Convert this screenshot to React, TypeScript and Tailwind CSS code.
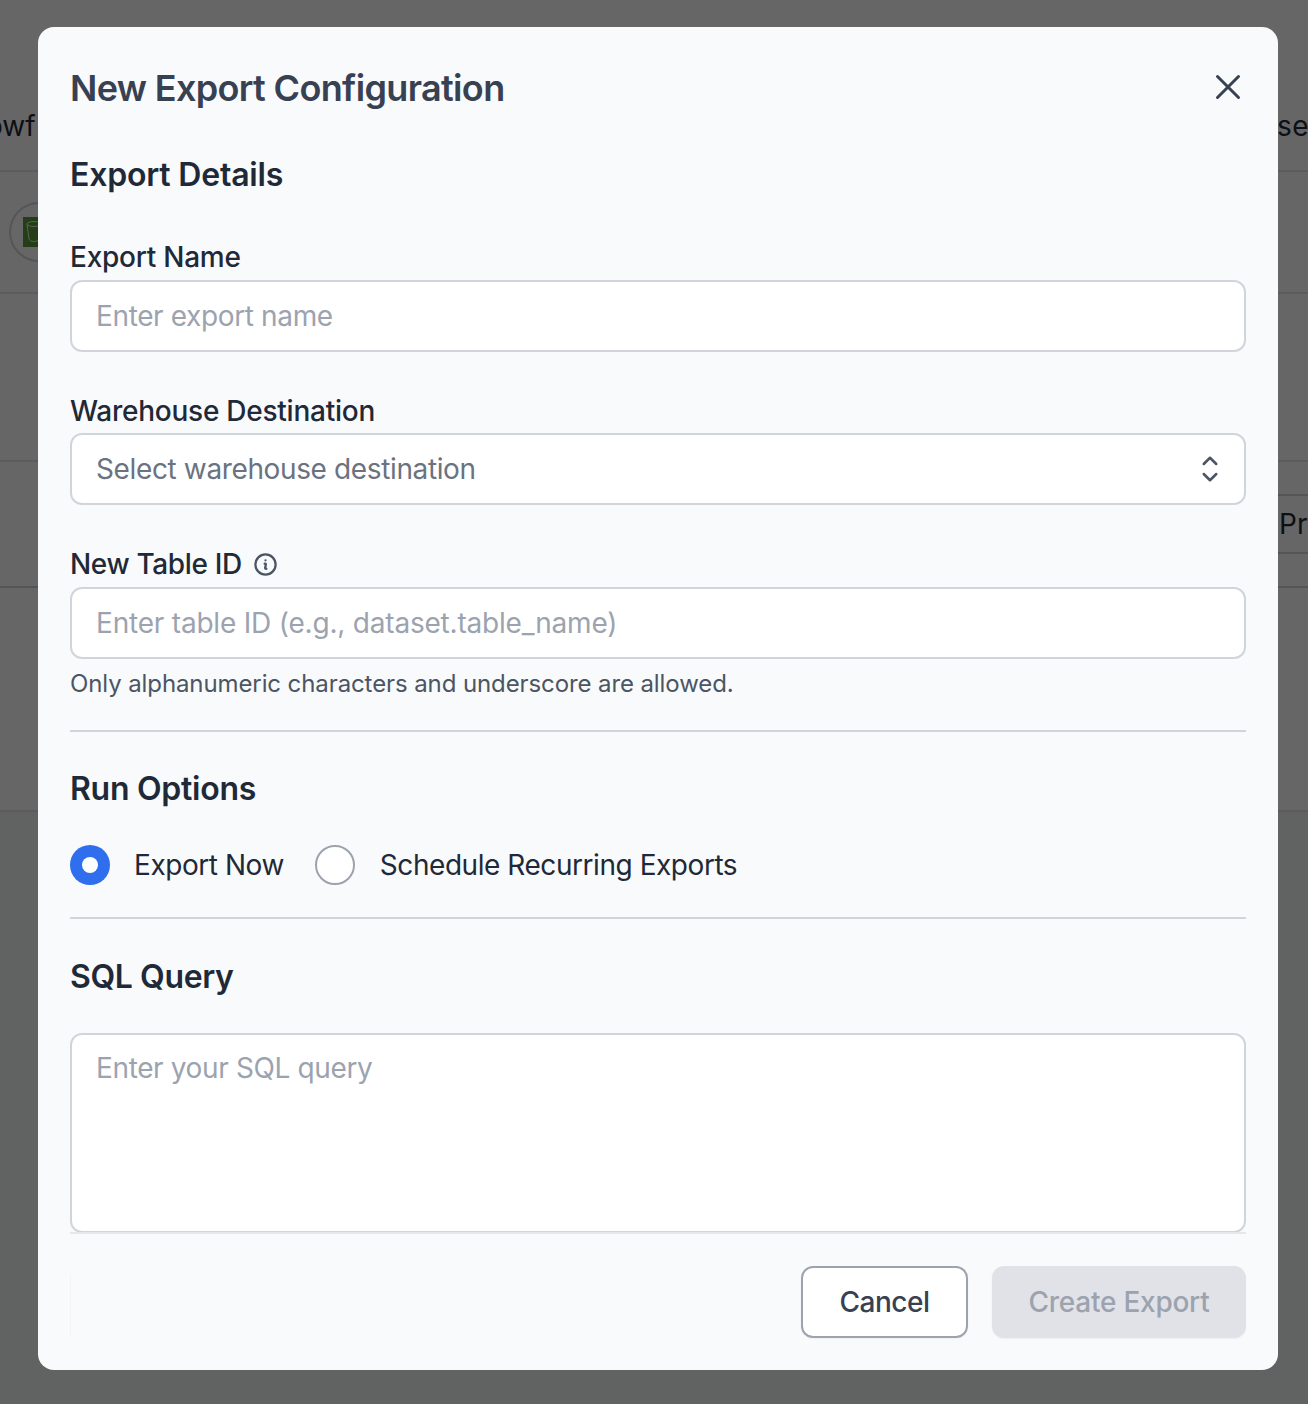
import { X } from "lucide-react";

function Field({ label, children }: { label: React.ReactNode; children: React.ReactNode }) {
  return (
    <div>
      <div className="flex items-center gap-[10px] h-[40px] text-[28px] font-medium text-[#1f2937] tracking-[-0.25px]">{label}</div>
      {children}
    </div>
  );
}

function Background() {
  return (
    <div className="h-full bg-[#f3f4f6] text-[28px] text-[#1f2937]">
      <div className="h-[172px] bg-white border-b-2 border-[#e5e7eb] pt-[105px] flex justify-between">
        <span className="-ml-[14px]">owf</span>
        <span className="-mr-[1px] tracking-[0.5px]">se</span>
      </div>
      <div className="h-[122px] bg-white border-b-2 border-[#e5e7eb] flex items-center pl-[9px]">
        <div className="w-[60px] h-[60px] rounded-full border-2 border-[#d1d5db] flex items-center justify-center">
          <div className="w-[32px] h-[30px] bg-[#5a9c3a]">
            <svg width="32" height="30" viewBox="0 0 32 30" fill="none" stroke="#e5efdd" strokeWidth="1">
              <ellipse cx="11" cy="7" rx="7" ry="2.5" />
              <path d="M4 7l2 15c.3 1.5 2.5 2.5 5 2.5s4.700-1 5-2.500l2-15" />
            </svg>
          </div>
        </div>
      </div>
      <div className="h-[168px] bg-white border-b-2 border-[#e5e7eb]" />
      <div className="h-[126px] bg-white border-b-2 border-[#d1d5db] flex justify-end items-center">
        <div className="w-[37px] h-[60px] pl-[8px] border-y-2 border-[#d1d5db] flex items-center overflow-hidden">Pro</div>
      </div>
      <div className="h-[224px] bg-white border-b-2 border-[#e5e7eb]" />
    </div>
  );
}

export default function App() {
  return (
    <div className="relative h-[1404px] w-[1308px] overflow-hidden bg-white font-['Inter',sans-serif]">
      <Background />
      <div className="absolute inset-0 bg-black/60" />
      <div className="absolute left-[38px] top-[27px] w-[1240px] h-[1343px] rounded-2xl bg-[#f9fafb] flex flex-col">
        <div className="h-[124px] shrink-0 flex items-start justify-between pl-[32px] pr-[29px] pt-[37px]">
          <h1 className="text-[36px] leading-[48px] font-semibold text-[#374151] tracking-[-0.65px]">New Export Configuration</h1>
          <X size={42} strokeWidth={1.7} className="text-[#374151] mt-[2px]" />
        </div>
        <div className="px-[32px] flex-1 overflow-hidden">
          <h2 className="text-[32px] leading-[48px] font-semibold text-[#1f2937] tracking-[-0.2px]">Export Details</h2>
          <div className="mt-[38px] flex flex-col gap-[39px]">
            <Field label="Export Name">
              <div className="mt-[3px] h-[72px] rounded-xl border-2 border-[#d1d5db] bg-white flex items-center px-[24px] text-[28px] text-[#9ca3af] tracking-[-0.37px]">Enter export name</div>
            </Field>
            <Field label="Warehouse Destination">
              <div className="mt-[2px] h-[72px] rounded-xl border-2 border-[#d1d5db] bg-white flex items-center justify-between pl-[24px] pr-[14px] text-[28px] text-[#6b7280] tracking-[-0.37px]">
                Select warehouse destination
                <svg width="40" height="40" viewBox="0 0 24 24" fill="none" stroke="#4b5563" strokeWidth="1.5" strokeLinecap="round" strokeLinejoin="round">
                  <path d="M8.250 15L12 18.750 15.750 15m-7.500-6L12 5.250 15.750 9" />
                </svg>
              </div>
            </Field>
            <Field
              label={
                <>
                  <span className="tracking-[-0.35px]">New Table ID</span>
                  <svg width="27" height="27" viewBox="0 0 24 24" fill="none" stroke="#4b5563" strokeWidth="2" strokeLinecap="round" strokeLinejoin="round">
                    <path d="M11.250 11.250l.041-.020a.750.750 0 011.063.852l-.708 2.836a.750.750 0 001.063.853l.041-.021M21 12a9 9 0 11-18 0 9 9 0 0118 0zm-9-3.750h.008v.008H12V8.250z" />
                  </svg>
                </>
              }
            >
              <div className="mt-[3px] h-[72px] rounded-xl border-2 border-[#d1d5db] bg-white flex items-center px-[24px] text-[28px] text-[#9ca3af] tracking-[-0.2px]">Enter table ID (e.g., dataset.table_name)</div>
              <p className="mt-[7px] text-[24px] leading-[36px] text-[#4b5563] tracking-[-0.1px]">Only alphanumeric characters and underscore are allowed.</p>
            </Field>
          </div>
          <div className="mt-[28px] border-t-2 border-[#d1d5db]" />
          <h2 className="mt-[33px] text-[32px] leading-[48px] font-semibold text-[#1f2937] tracking-[-0.27px]">Run Options</h2>
          <div className="mt-[31px] flex items-center gap-[31px] text-[28px] text-[#1f2937] tracking-[-0.45px]">
            <div className="flex items-center gap-[24px]">
              <span className="w-[40px] h-[40px] rounded-full bg-[#2f6fed] flex items-center justify-center">
                <span className="w-[16px] h-[16px] rounded-full bg-white" />
              </span>
              Export Now
            </div>
            <div className="flex items-center gap-[25px]">
              <span className="w-[40px] h-[40px] rounded-full border-2 border-[#9ca3af] bg-white" />
              Schedule Recurring Exports
            </div>
          </div>
          <div className="mt-[31px] border-t-2 border-[#d1d5db]" />
          <h2 className="mt-[34px] text-[32px] leading-[48px] font-semibold text-[#1f2937] tracking-[-0.4px]">SQL Query</h2>
          <div className="mt-[32px] h-[200px] rounded-xl border-2 border-[#d1d5db] bg-white px-[24px] pt-[13px] text-[28px] leading-[40px] text-[#9ca3af] tracking-[-0.37px]">Enter your SQL query</div>
        </div>
        <div className="mx-[32px] h-[138px] shrink-0 border-t-2 border-[#e5e7eb] flex items-start gap-[24px] pt-[32px]">
          <div className="mr-auto mt-[8px] w-[1px] h-[62px] bg-[#f3f4f6]" />
          <button className="w-[167px] h-[72px] rounded-xl border-2 border-[#9ca3af] bg-white text-[28px] font-medium text-[#374151] tracking-[-0.5px] shadow-xs">Cancel</button>
          <button className="w-[254px] h-[72px] rounded-xl bg-[#e0e2e7] text-[28px] font-medium text-[#9ca3af] tracking-[-0.25px] shadow-xs">Create Export</button>
        </div>
      </div>
    </div>
  );
}
